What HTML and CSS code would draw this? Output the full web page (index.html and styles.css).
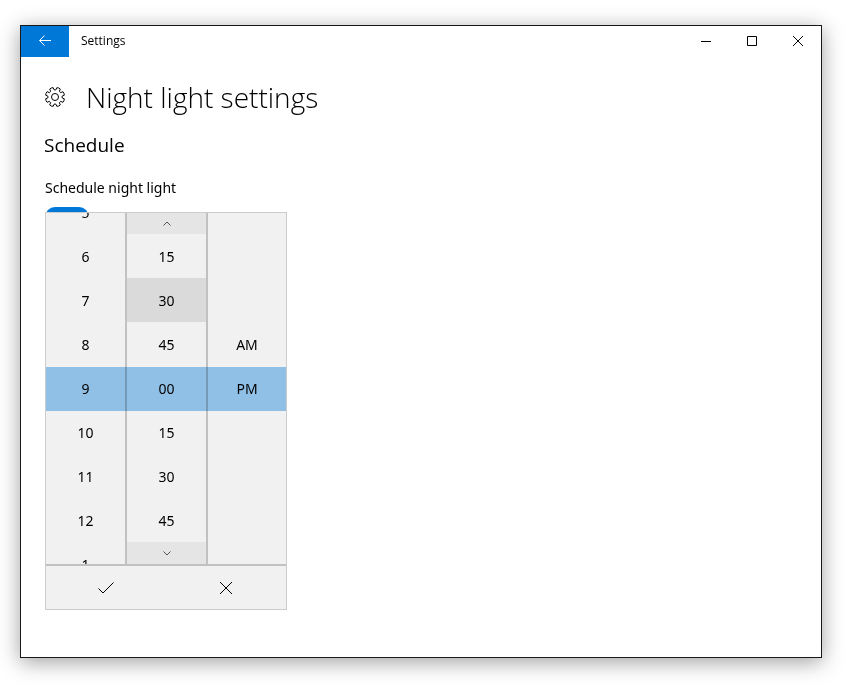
FILE: index.html
```html
<!DOCTYPE html>
<html lang="en">
<head>
    <meta charset="UTF-8">
    <meta name="viewport" content="width=device-width, initial-scale=1.0">
    <title>Settings</title>
    <link rel="stylesheet" href="styles.css">
</head>
<body>
    <div class="window">

        <!-- Title bar -->
        <header class="titlebar">
            <button type="button" class="back-button" aria-label="Back">
                <svg width="14" height="13" viewBox="0 0 14 13"><path d="M13 5.5H1.5M6.5.5l-5 5 5 5"/></svg>
            </button>
            <span class="titlebar-text">Settings</span>
            <div class="window-buttons">
                <button type="button" aria-label="Minimize">
                    <svg width="10" height="10" viewBox="0 0 10 10"><path d="M0 5.5h10"/></svg>
                </button>
                <button type="button" aria-label="Maximize">
                    <svg width="10" height="10" viewBox="0 0 10 10"><path d="M.5.5h9v9h-9z"/></svg>
                </button>
                <button type="button" aria-label="Close">
                    <svg width="10" height="10" viewBox="0 0 10 10"><path d="M0 0l10 10M10 0L0 10"/></svg>
                </button>
            </div>
        </header>

        <main class="content">
            <div class="page-title">
                <svg class="gear" width="22" height="22" viewBox="-11 -11 22 22">
                    <path d="M1.8-9.3Q3.8-9.5 5.3-7.9L4.4-5.7Q4.8-4.8 5.7-4.4L7.9-5.3Q9.3-4 9.3-1.8L7.2-.9Q6.8 0 7.2.9L9.3 1.8Q9.3 4 7.9 5.3L5.7 4.4Q4.8 4.8 4.4 5.7L5.3 7.9Q3.8 9.5 1.8 9.3L.9 7.2Q0 6.8-.9 7.2L-1.8 9.3Q-3.8 9.5-5.3 7.9L-4.4 5.7Q-4.8 4.8-5.7 4.4L-7.9 5.3Q-9.3 4-9.3 1.8L-7.2.9Q-6.8 0-7.2-.9L-9.3-1.8Q-9.3-4-7.9-5.3L-5.7-4.4Q-4.8-4.8-4.4-5.7L-5.3-7.9Q-3.8-9.5-1.8-9.3L-.9-7.2Q0-6.8.9-7.2Z"/>
                    <circle r="3.5"/>
                </svg>
                <h1>Night light settings</h1>
            </div>

            <h2>Schedule</h2>

            <div class="setting">
                <label for="schedule">Schedule night light</label>
                <input type="checkbox" id="schedule" class="toggle" checked>

                <!-- Time picker flyout -->
                <div class="time-picker">
                    <div class="columns">
                        <div class="column hours">
                            <button type="button">5</button>
                            <button type="button">6</button>
                            <button type="button">7</button>
                            <button type="button">8</button>
                            <button type="button">9</button>
                            <button type="button">10</button>
                            <button type="button">11</button>
                            <button type="button">12</button>
                            <button type="button">1</button>
                        </div>
                        <div class="column minutes">
                            <button type="button" class="scroll" aria-label="Up">
                                <svg width="8" height="5" viewBox="0 0 8 5"><path d="M.5 4.5L4 1l3.5 3.5"/></svg>
                            </button>
                            <button type="button">15</button>
                            <button type="button" class="hovered">30</button>
                            <button type="button">45</button>
                            <button type="button">00</button>
                            <button type="button">15</button>
                            <button type="button">30</button>
                            <button type="button">45</button>
                            <button type="button" class="scroll" aria-label="Down">
                                <svg width="8" height="5" viewBox="0 0 8 5"><path d="M.5.5L4 4 7.5.5"/></svg>
                            </button>
                        </div>
                        <div class="column period">
                            <button type="button">AM</button>
                            <button type="button">PM</button>
                        </div>
                        <div class="selection"></div>
                    </div>
                    <div class="actions">
                        <button type="button" aria-label="Accept">
                            <svg width="16" height="12" viewBox="0 0 16 12"><path d="M.5 6.5l4.5 4.5L15.5.5"/></svg>
                        </button>
                        <button type="button" aria-label="Cancel">
                            <svg width="12" height="12" viewBox="0 0 12 12"><path d="M0 0l12 12M12 0L0 12"/></svg>
                        </button>
                    </div>
                </div>
            </div>
        </main>

    </div>
</body>
</html>
```
FILE: styles.css
```css
* {
    box-sizing: border-box;
}

body {
    margin: 0;
    padding: 25px 25px 29px 20px;
    min-height: 100vh;
    display: flex;
    flex-direction: column;
    background-color: #fff;
    color: #000;
    font-family: "Noto Sans", "Open Sans", sans-serif;
    font-size: 14px;
}

button {
    display: flex;
    align-items: center;
    justify-content: center;
    margin: 0;
    padding: 0;
    border: none;
    background: none;
    color: inherit;
    font: inherit;
}

svg {
    display: block;
    fill: none;
    stroke: #000;
    stroke-width: 1;
}

.window {
    flex: 1;
    border: 1px solid #181818;
    background-color: #fff;
    box-shadow: 0 4px 20px rgba(0, 0, 0, 0.38);
}

/* Title bar */
.titlebar {
    display: flex;
    height: 31px;
}

.back-button {
    width: 48px;
    background-color: #0078d7;
}

.back-button svg {
    stroke: #fff;
}

.titlebar-text {
    flex: 1;
    padding-left: 12px;
    font-family: "Open Sans", sans-serif;
    font-size: 12px;
    line-height: 30px;
}

.window-buttons {
    display: flex;
    height: 30px;
}

.window-buttons button {
    width: 46px;
}

/* Content */
.content {
    padding: 20px 24px;
}

.page-title {
    display: flex;
    align-items: center;
    gap: 20px;
    margin-left: -1px;
}

h1 {
    margin: 0;
    font-family: "Open Sans", sans-serif;
    font-size: 28px;
    font-weight: 300;
    line-height: 40px;
}

h2 {
    margin: 14px 0 0 -1px;
    font-family: "Open Sans", sans-serif;
    font-size: 19px;
    font-weight: 400;
    line-height: 28px;
}

.setting {
    position: relative;
    display: flex;
    flex-direction: column;
    align-items: flex-start;
    gap: 9px;
    margin-top: 19px;
}

.setting label {
    line-height: 20px;
}

.toggle {
    appearance: none;
    width: 44px;
    height: 20px;
    margin: 0;
    border-radius: 10px;
    background-color: #0078d7;
}

/* Time picker, opens over the toggle */
.time-picker {
    position: absolute;
    top: 34px;
    left: 0;
    width: 242px;
    border: 1px solid #ccc;
    background-color: #f1f1f1;
}

.columns {
    position: relative;
    display: grid;
    grid-template-columns: 81px 81px 1fr;
    height: 351px;
    overflow: hidden;
}

.column {
    margin-top: -1px;
    border-right: 2px solid #c1c1c1;
}

.column button {
    width: 100%;
    height: 44px;
}

.hours {
    margin-top: -23px;
}

.period {
    padding-top: 110px;
    border-right: none;
}

.column .scroll {
    height: 22px;
    background-color: #e5e5e5;
}

.scroll svg {
    stroke: #555;
}

.column .hovered {
    background-color: #dadada;
}

.selection {
    position: absolute;
    top: 154px;
    left: 0;
    right: 0;
    height: 44px;
    background-color: #99cbf4;
    mix-blend-mode: multiply;
    pointer-events: none;
}

.actions {
    display: flex;
    border-top: 2px solid #c1c1c1;
}

.actions button {
    flex: 1;
    height: 43px;
}
```
